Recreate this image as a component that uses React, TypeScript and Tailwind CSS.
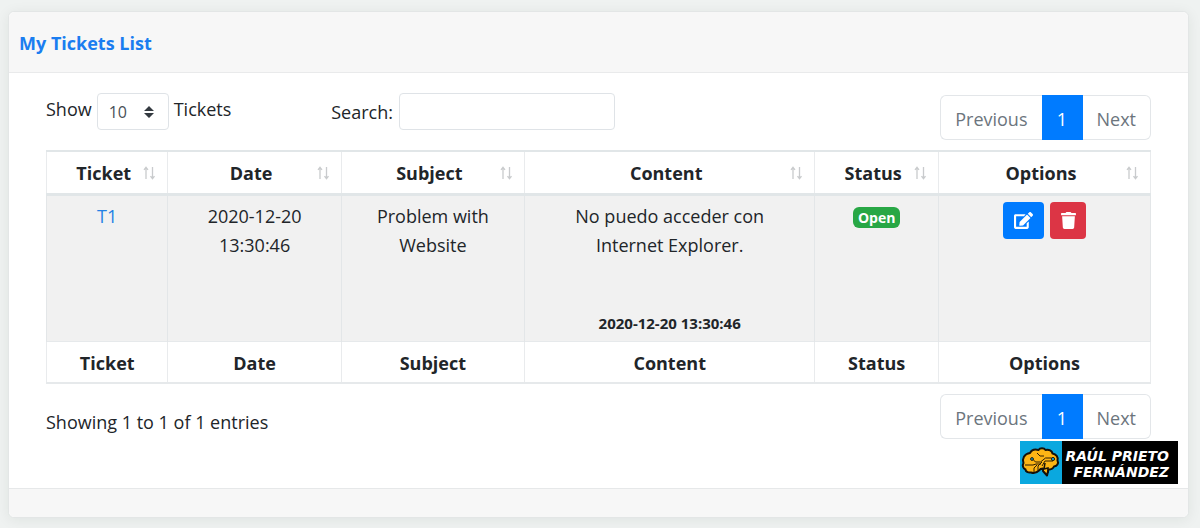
import { FaEdit, FaTrash } from 'react-icons/fa'

interface Column {
  name: string
  width: string
}

const columns: Column[] = [
  { name: 'Ticket', width: 'w-[11%]' },
  { name: 'Date', width: 'w-[15.7%]' },
  { name: 'Subject', width: 'w-[16.6%]' },
  { name: 'Content', width: 'w-[26.3%]' },
  { name: 'Status', width: 'w-[11.2%]' },
  { name: 'Options', width: 'w-[19.2%]' },
]

function SortIcon() {
  return (
    <svg viewBox="0 0 14 14" className="h-[14px] w-[14px] shrink-0" fill="none" stroke="#c9cbcd" strokeWidth="1.3" aria-hidden="true">
      <path d="M4 13V1.5M2 3.8L4 1.3l2 2.5" />
      <path d="M10.5 1v11.5M8.5 10.2l2 2.5 2-2.5" />
    </svg>
  )
}

function Pagination() {
  return (
    <nav className="flex h-[45px] text-lg leading-6 text-[#6c757d]">
      <button className="rounded-l-md border border-r-0 border-[#e3e6e9] bg-white px-[14px] pt-[2px]">Previous</button>
      <button className="w-[41px] bg-[#007bff] pt-[2px] text-white">1</button>
      <button className="rounded-r-md border border-l-0 border-[#e3e6e9] bg-white px-[14px] pt-[2px]">Next</button>
    </nav>
  )
}

function BrainIcon() {
  return (
    <svg viewBox="0 0 42 43" className="h-full w-[42px] shrink-0 bg-[#0aa8df]" aria-hidden="true">
      <path
        d="M10 12c1.5-3 5-4 8.5-3 1.5-2.5 5.500-2.5 7 0 3.500-.8 6.500.8 7 3.500 3.500.5 6 3.500 5 7 1.500 3-.5 5.500-3.500 6-1 2.500-3 3-5.500 3l-1.500 6-4-4.500v-2.500c-2 0-3 .5-4 2-2 2-5 3-8 2-3 .5-5.500-1-5.500-3-2.500-1-3.500-4-2-6.500-1.500-4.500.5-9 6.500-10z"
        fill="#fdb515"
        stroke="#15110a"
        strokeWidth="2"
        strokeLinejoin="round"
      />
      <g fill="none" stroke="#2c1c05" strokeWidth="1">
        <path d="M12.5 18l3 3h5l5-4h6M5 24h8l3-1h5M14 31v-4l3-3M18 29v-4l4-4M22 25l3-5h8M17 12l3 3h4" />
        <circle cx="12" cy="18" r="1.4" fill="#0aa8df" />
        <circle cx="33" cy="18" r="1.6" fill="#0aa8df" />
      </g>
      <path d="M25 22l-1 6 4-1v5" fill="none" stroke="#15110a" strokeWidth="1.5" />
    </svg>
  )
}

function Brand() {
  return (
    <div className="absolute right-[10px] bottom-1 flex h-[43px] w-[158px] bg-black">
      <BrainIcon />
      <div className="flex-1 pt-[7px] pr-[9px] text-right font-['DejaVu_Sans',sans-serif] text-sm leading-4 font-bold whitespace-nowrap text-white italic">
        <div>RAÚL PRIETO</div>
        <div>FERNÁNDEZ</div>
      </div>
    </div>
  )
}

function TicketsTable() {
  return (
    <table className="mt-[10px] w-full table-fixed border-collapse border border-[#e3e6e9] text-center">
      <thead>
        <tr className="h-[43px] border-t-2 border-b-[3px] border-[#e1e6e8]">
          {columns.map((col) => (
            <th key={col.name} className={`${col.width} border-x border-[#e9ebed] px-[11px] pt-px`}>
              <button className="grid w-full grid-cols-[7px_1fr_14px] items-center font-bold">
                <span />
                <span>{col.name}</span>
                <SortIcon />
              </button>
            </th>
          ))}
        </tr>
      </thead>
      <tbody>
        <tr className="h-[147px] bg-[#f1f1f1] align-top leading-[29px] [&>td]:border-x [&>td]:border-[#e3e6e8] [&>td]:pt-[6px]">
          <td>
            <a href="#t1" className="text-[#2381e5]">T1</a>
          </td>
          <td className="px-6">2020-12-20 13:30:46</td>
          <td className="px-6">Problem with Website</td>
          <td className="px-3">
            <p className="px-6">No puedo acceder con Internet Explorer.</p>
            <p className="mt-[49px] text-[15px] leading-[29px] font-bold">2020-12-20 13:30:46</p>
          </td>
          <td>
            <span className="inline-block rounded-md bg-[#28a745] px-[5px] text-sm leading-[21px] font-bold text-white">Open</span>
          </td>
          <td>
            <div className="flex justify-center gap-[6px]">
              <button aria-label="Edit" className="flex h-[37px] w-[41px] items-center justify-center rounded bg-[#007bff] text-white">
                <FaEdit size={19} />
              </button>
              <button aria-label="Delete" className="flex h-[37px] w-9 items-center justify-center rounded bg-[#dc3545] text-white">
                <FaTrash size={17} />
              </button>
            </div>
          </td>
        </tr>
      </tbody>
      <tfoot>
        <tr className="h-[42px] border-t border-b-2 border-[#e6e9eb]">
          {columns.map((col) => (
            <th key={col.name} className="border-x border-[#e9ebed] pt-[2px] font-bold">
              {col.name}
            </th>
          ))}
        </tr>
      </tfoot>
    </table>
  )
}

export default function App() {
  return (
    <div className="min-h-screen bg-[#eff2f1] pt-[11px] pr-[11px] pb-[10px] pl-2 font-['Open_Sans',sans-serif] text-lg leading-7 text-[#212529]">
      <div className="rounded-md border border-[#e3e6e6] bg-white shadow-[0_2px_14px_rgba(0,40,30,0.07)]">
        <header className="rounded-t-md border-b border-[#e9eaeb] bg-[#f7f7f7] px-[10px] pt-[17px] pb-[15px]">
          <h1 className="font-bold text-[#1a7df0]">My Tickets List</h1>
        </header>

        <main className="relative px-[37px] pt-5 pb-[49px]">
          <div className="flex items-start">
            <label className="flex w-1/4 items-start gap-[5px] leading-8">
              Show
              <span className="relative">
                <select className="h-[37px] w-[72px] appearance-none rounded border border-[#dfe3e7] bg-white pl-[11px] text-base text-[#495057]">
                  <option>10</option>
                </select>
                <svg viewBox="0 0 10 12" className="pointer-events-none absolute top-[13px] right-[15px] h-3 w-[10px]" fill="#343a40" aria-hidden="true">
                  <path d="M5 0l5 5H0zM5 12L0 7h10z" />
                </svg>
              </span>
              Tickets
            </label>
            <label className="ml-[9px] flex items-center gap-[6px]">
              Search:
              <input type="search" className="h-[37px] w-[216px] rounded border border-[#dfe3e7] bg-white px-2" />
            </label>
            <div className="mt-[2px] ml-auto">
              <Pagination />
            </div>
          </div>

          <TicketsTable />

          <div className="mt-[10px] flex items-start justify-between">
            <p className="pt-[14px]">Showing 1 to 1 of 1 entries</p>
            <Pagination />
          </div>

          <Brand />
        </main>

        <footer className="h-[29px] rounded-b-md border-t border-[#e6e8e9] bg-[#f7f7f7]" />
      </div>
    </div>
  )
}
